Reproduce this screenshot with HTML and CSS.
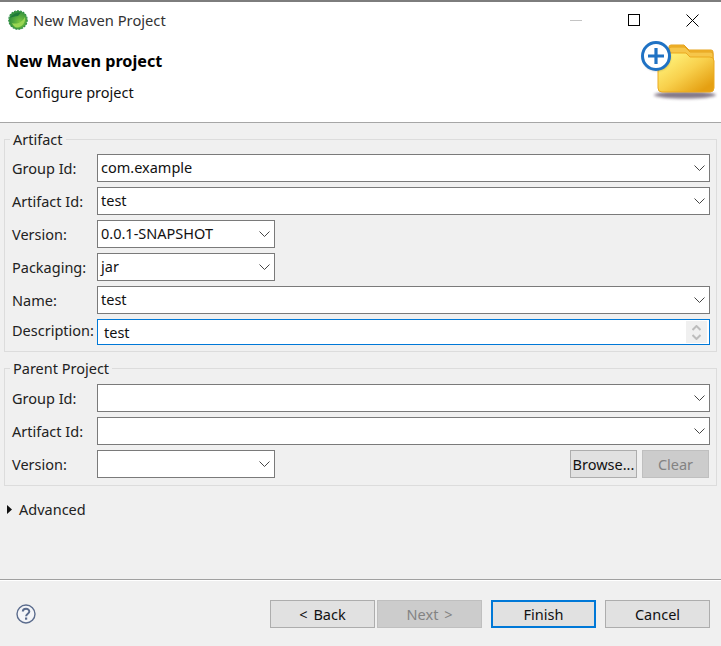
FILE: index.html
```html
<!DOCTYPE html>
<html lang="en">
<head>
<meta charset="utf-8">
<title>New Maven Project</title>
<link rel="stylesheet" href="styles.css">
</head>
<body>
<div class="window">
  <header class="top">
    <div class="titlebar">
      <svg class="app-icon" viewBox="0 0 20 20" width="20" height="20" aria-hidden="true">
        <defs><radialGradient id="sg" cx="0.6" cy="0.6" r="0.65"><stop offset="0" stop-color="#7cc63f"/><stop offset="1" stop-color="#2a8a3c"/></radialGradient></defs>
        <circle cx="10" cy="10" r="9.200" fill="url(#sg)" stroke="#2f8f45" stroke-width="1.200" stroke-dasharray="2 1"/>
        <path d="M4 13C8 14.500 14 13 17 7C18 12 14 17.500 9 17.500C7 17.500 5 15.500 4 13Z" fill="#9ad653"/>
        <path d="M2 8C4 4 9 2 13 2.500L10 6C7 6 4 7 2 8Z" fill="#1e7a3a"/>
      </svg>
      <span class="title">New Maven Project</span>
      <div class="controls">
        <span class="ctl"><svg width="12" height="12" viewBox="0 0 12 12"><path d="M0 6.500H12" stroke="#c4c4c4"/></svg></span>
        <span class="ctl"><svg width="12" height="12" viewBox="0 0 12 12"><rect x="0.500" y="0.500" width="11" height="11" fill="none" stroke="#000"/></svg></span>
        <span class="ctl"><svg width="13" height="13" viewBox="0 0 13 13"><path d="M0.500 0.500L12.500 12.500M12.500 0.500L0.500 12.500" stroke="#000" fill="none"/></svg></span>
      </div>
    </div>
    <div class="banner">
      <div class="banner-text">
        <h1>New Maven project</h1>
        <p>Configure project</p>
      </div>
      <svg class="wizard-icon" width="81" height="62" viewBox="0 0 81 62" aria-hidden="true">
        <defs>
          <linearGradient id="fold" x1="0.1" y1="0.15" x2="0.85" y2="0.9"><stop offset="0" stop-color="#fff27a"/><stop offset="0.5" stop-color="#f8d04c"/><stop offset="1" stop-color="#e5a012"/></linearGradient>
          <filter id="blur" x="-20%" y="-100%" width="140%" height="300%"><feGaussianBlur stdDeviation="1.800"/></filter>
          <filter id="blur2"><feGaussianBlur stdDeviation="1"/></filter>
        </defs>
        <ellipse cx="45" cy="54" rx="31" ry="3.500" fill="#4f3f55" opacity="0.7" filter="url(#blur)"/>
        <path d="M29 20V6Q29 4 31 4H44L49 9H71Q73 9 73 11V20Z" fill="#f2b731" stroke="#e5a21c"/>
        <path d="M29 20V8Q29 6 31 6H45L50 11H71Q73 11 73 13V20Z" fill="#f6c64a" stroke="#e5a21c"/>
        <path d="M18 20V15Q18 12 21 12H46L50 16H70Q74 16 74 20V47Q74 51 70 51H22Q18 51 18 47Z" fill="url(#fold)" stroke="#eba91f"/>
        <circle cx="16.500" cy="16" r="14" fill="#000" opacity="0.25" filter="url(#blur2)"/>
        <circle cx="16" cy="15" r="13.500" fill="#fff" stroke="#1f72c4" stroke-width="3"/>
        <path d="M16 7V23M8 15H24" stroke="#1f72c4" stroke-width="3.200" fill="none"/>
      </svg>
    </div>
  </header>

  <main class="content">
    <section class="group group-artifact">
      <h2 class="legend">Artifact</h2>
      <div class="form">
        <label>Group Id:</label>
        <div class="combo"><span>com.example</span><svg class="chev" width="11" height="6" viewBox="0 0 11 6"><path d="M0.500 0.500L5.500 5.500L10.500 0.500" fill="none" stroke="#444"/></svg></div>
        <label>Artifact Id:</label>
        <div class="combo"><span>test</span><svg class="chev" width="11" height="6" viewBox="0 0 11 6"><path d="M0.500 0.500L5.500 5.500L10.500 0.500" fill="none" stroke="#444"/></svg></div>
        <label>Version:</label>
        <div class="combo small"><span>0.0.1-SNAPSHOT</span><svg class="chev" width="11" height="6" viewBox="0 0 11 6"><path d="M0.500 0.500L5.500 5.500L10.500 0.500" fill="none" stroke="#444"/></svg></div>
        <label>Packaging:</label>
        <div class="combo small"><span>jar</span><svg class="chev" width="11" height="6" viewBox="0 0 11 6"><path d="M0.500 0.500L5.500 5.500L10.500 0.500" fill="none" stroke="#444"/></svg></div>
        <label>Name:</label>
        <div class="combo"><span>test</span><svg class="chev" width="11" height="6" viewBox="0 0 11 6"><path d="M0.500 0.500L5.500 5.500L10.500 0.500" fill="none" stroke="#444"/></svg></div>
        <label class="desc-label">Description:</label>
        <div class="textarea"><span>test</span>
          <div class="spin">
            <svg width="9" height="6" viewBox="0 0 9 6"><path d="M0.500 5L4.500 1L8.500 5" fill="none" stroke="#bdbdbd" stroke-width="2"/></svg>
            <svg width="9" height="6" viewBox="0 0 9 6"><path d="M0.500 1L4.500 5L8.500 1" fill="none" stroke="#bdbdbd" stroke-width="2"/></svg>
          </div>
        </div>
      </div>
    </section>

    <section class="group group-parent">
      <h2 class="legend">Parent Project</h2>
      <div class="form">
        <label>Group Id:</label>
        <div class="combo"><span></span><svg class="chev" width="11" height="6" viewBox="0 0 11 6"><path d="M0.500 0.500L5.500 5.500L10.500 0.500" fill="none" stroke="#444"/></svg></div>
        <label>Artifact Id:</label>
        <div class="combo"><span></span><svg class="chev" width="11" height="6" viewBox="0 0 11 6"><path d="M0.500 0.500L5.500 5.500L10.500 0.500" fill="none" stroke="#444"/></svg></div>
        <label>Version:</label>
        <div class="version-row">
          <div class="combo small"><span></span><svg class="chev" width="11" height="6" viewBox="0 0 11 6"><path d="M0.500 0.500L5.500 5.500L10.500 0.500" fill="none" stroke="#444"/></svg></div>
          <div class="row-buttons">
            <button class="btn browse" type="button">Browse...</button>
            <button class="btn clear" type="button" disabled>Clear</button>
          </div>
        </div>
      </div>
    </section>

    <div class="advanced">
      <svg width="5" height="9" viewBox="0 0 5 9" aria-hidden="true"><path d="M0 0L5 4.500L0 9Z" fill="#111"/></svg>
      <span>Advanced</span>
    </div>
  </main>

  <footer class="footer">
    <svg class="help" width="20" height="20" viewBox="0 0 20 20" aria-hidden="true">
      <circle cx="10" cy="10" r="9" fill="#f4f5f8" stroke="#5b6c8d" stroke-width="1.400"/>
      <path d="M6.800 7.600C6.800 3.900 13.300 3.900 13.300 7.500C13.300 9.700 10.100 9.800 10.100 12.300" fill="none" stroke="#5b6c8d" stroke-width="2"/>
      <rect x="9" y="13.500" width="2.200" height="2.200" fill="#5b6c8d"/>
    </svg>
    <div class="nav">
      <div class="nav-pair">
        <button class="btn wide" type="button">&lt; Back</button>
        <button class="btn wide off" type="button" disabled>Next &gt;</button>
      </div>
      <button class="btn wide primary" type="button">Finish</button>
      <button class="btn wide" type="button">Cancel</button>
    </div>
  </footer>
</div>
</body>
</html>
```
FILE: styles.css
```css
* { box-sizing: border-box; }
html, body { margin: 0; padding: 0; }
body {
  width: 721px;
  height: 646px;
  overflow: hidden;
  background: #f0f0f0;
  font-family: "Noto Sans", "Open Sans", "Liberation Sans", sans-serif;
  font-size: 14px;
  color: #111;
}
.window { display: flex; flex-direction: column; height: 646px; border-top: 2px solid #7d7d7d; }
.top { background: #fff; height: 121px; border-bottom: 1px solid #a6a6a6; flex: none; }
.titlebar { display: flex; align-items: center; height: 36px; padding-left: 8px; }
.app-icon { flex: none; margin-right: 5px; margin-top: -1px; }
.title { color: #333; font-size: 14.700px; margin-top: -1px; }
.controls { margin-left: auto; display: flex; align-items: center; }
.ctl { width: 58px; display: flex; justify-content: center; align-items: center; }
.banner { display: flex; justify-content: space-between; height: 84px; padding-left: 6px; position: relative; }
.banner h1 { margin: 0; font-size: 16.200px; font-weight: 700; color: #000; line-height: 22px; margin-top: 12px; }
.banner p { margin: 0; margin-top: 10px; margin-left: 9px; font-size: 14.500px; line-height: 20px; color: #111; }
.wizard-icon { position: absolute; right: 0; top: 3px; }
.content { flex: 1; padding: 16px 4px 0 4px; display: flex; flex-direction: column; }
.group { position: relative; border: 1px solid #dcdcdc; width: 713px; padding: 0 6px 0 7px; }
.group-artifact { height: 213px; padding-top: 14px; }
.group-parent { height: 118px; margin-top: 16px; padding-top: 15px; }
.legend { position: absolute; top: -11px; left: 5px; margin: 0; padding: 0 3px; background: #f0f0f0; font-size: 14.500px; font-weight: 400; line-height: 20px; color: #222; }
.form { display: grid; grid-template-columns: 85px 1fr; row-gap: 5px; align-items: center; }
label { font-size: 14.500px; color: #222; line-height: 28px; margin-top: -1px; }
.desc-label { line-height: 20px; margin-top: -4px; white-space: nowrap; }
.combo { display: flex; align-items: center; justify-content: space-between; height: 28px; background: #fff; border: 1px solid #7a7a7a; padding: 0 4px 0 3px; font-size: 14.500px; color: #111; }
.combo > span { margin-top: -2px; }
.combo.small { width: 178px; }
.chev { flex: none; }
.textarea { display: flex; justify-content: space-between; align-items: center; height: 26px; background: #fff; border: 1px solid #0078d7; padding: 0 2px 0 6px; font-size: 14.500px; color: #111; }
.spin { width: 21px; height: 22px; background: #f0f0f0; display: flex; flex-direction: column; align-items: center; justify-content: center; gap: 3px; }
.spin svg { display: block; }
.version-row { display: flex; justify-content: space-between; }
.row-buttons { display: flex; gap: 5px; padding-right: 1px; }
.btn { height: 28px; padding: 0; background: #e1e1e1; border: 1px solid #adadad; font-family: inherit; font-size: 14.500px; color: #111; word-spacing: 2px; }
.browse { width: 67px; white-space: nowrap; }
.clear { width: 67px; background: #cccccc; border-color: #bfbfbf; color: #838383; }
.advanced { display: flex; align-items: center; gap: 7px; margin-top: 13px; padding-left: 3px; font-size: 14.500px; line-height: 20px; color: #222; }
.footer { flex: none; height: 67px; border-top: 1px solid #a0a0a0; box-shadow: inset 0 1px 0 #fff; display: flex; align-items: flex-start; padding-top: 20px; padding-left: 16px; }
.help { margin-top: 4px; }
.nav { margin-left: auto; display: flex; gap: 9px; padding-right: 11px; }
.nav-pair { display: flex; gap: 2px; }
.wide { width: 105px; }
.off { background: #cccccc; border-color: #bfbfbf; color: #838383; }
.primary { border: 2px solid #0078d7; }
```
